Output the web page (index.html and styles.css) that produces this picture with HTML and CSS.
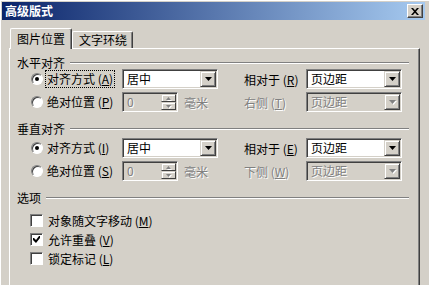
FILE: index.html
```html
<!DOCTYPE html>
<html lang="zh-CN">
<head>
  <meta charset="UTF-8" />
  <title>高级版式</title>
  <link rel="stylesheet" href="styles.css">
</head>
<body>
  <div class="dialog">
    <div class="titlebar">
      <span class="title">高级版式</span>
      <span class="close">
        <svg width="8" height="7" viewBox="0 0 8 7"><path d="M0 0h2l2 2.3L6 0h2L5 3.5 8 7H6L4 4.7 2 7H0l3-3.5z"/></svg>
      </span>
    </div>

    <div class="tabs">
      <div class="tab active">图片位置</div>
      <div class="tab">文字环绕</div>
    </div>

    <div class="panel">
      <div class="legend"><span>水平对齐</span><i class="rule"></i></div>
      <div class="rows rows-h">
        <div class="row">
          <div class="opt"><span class="radio on"></span><span class="lbl focus">对齐方式 (<u>A</u>)</span></div>
          <div class="mid"><div class="combo"><span class="val">居中</span><span class="drop"><svg width="7" height="4" viewBox="0 0 7 4"><path d="M0 0h7L3.5 4z"/></svg></span></div></div>
          <div class="side">相对于 (<u>R</u>)</div>
          <div class="combo"><span class="val">页边距</span><span class="drop"><svg width="7" height="4" viewBox="0 0 7 4"><path d="M0 0h7L3.5 4z"/></svg></span></div>
        </div>
        <div class="row">
          <div class="opt"><span class="radio"></span><span class="lbl">绝对位置 (<u>P</u>)</span></div>
          <div class="mid">
            <div class="spin"><span class="val off">0</span><span class="spin-btns"><span class="sb"><svg width="5" height="3" viewBox="0 0 5 3"><path d="M2.5 0L5 3H0z"/></svg></span><span class="sb"><svg width="5" height="3" viewBox="0 0 5 3"><path d="M0 0h5L2.5 3z"/></svg></span></span></div>
            <span class="unit off">毫米</span>
          </div>
          <div class="side off">右侧 (<u>T</u>)</div>
          <div class="combo disabled"><span class="val off">页边距</span><span class="drop"><svg width="7" height="4" viewBox="0 0 7 4"><path d="M0 0h7L3.5 4z"/></svg></span></div>
        </div>
      </div>

      <div class="legend legend-v"><span>垂直对齐</span><i class="rule"></i></div>
      <div class="rows rows-v">
        <div class="row">
          <div class="opt"><span class="radio on"></span><span class="lbl">对齐方式 (<u>I</u>)</span></div>
          <div class="mid"><div class="combo"><span class="val">居中</span><span class="drop"><svg width="7" height="4" viewBox="0 0 7 4"><path d="M0 0h7L3.5 4z"/></svg></span></div></div>
          <div class="side">相对于 (<u>E</u>)</div>
          <div class="combo"><span class="val">页边距</span><span class="drop"><svg width="7" height="4" viewBox="0 0 7 4"><path d="M0 0h7L3.5 4z"/></svg></span></div>
        </div>
        <div class="row">
          <div class="opt"><span class="radio"></span><span class="lbl">绝对位置 (<u>S</u>)</span></div>
          <div class="mid">
            <div class="spin"><span class="val off">0</span><span class="spin-btns"><span class="sb"><svg width="5" height="3" viewBox="0 0 5 3"><path d="M2.5 0L5 3H0z"/></svg></span><span class="sb"><svg width="5" height="3" viewBox="0 0 5 3"><path d="M0 0h5L2.5 3z"/></svg></span></span></div>
            <span class="unit off">毫米</span>
          </div>
          <div class="side off">下侧 (<u>W</u>)</div>
          <div class="combo disabled"><span class="val off">页边距</span><span class="drop"><svg width="7" height="4" viewBox="0 0 7 4"><path d="M0 0h7L3.5 4z"/></svg></span></div>
        </div>
      </div>

      <div class="legend legend-o"><span>选项</span><i class="rule"></i></div>
      <div class="checks">
        <div class="check-row"><span class="box"></span><span class="lbl">对象随文字移动 (<u>M</u>)</span></div>
        <div class="check-row"><span class="box"><svg width="7" height="7" viewBox="0 0 7 7"><path d="M0 2h1l2 2 3-4h1v2L3 7 0 4z"/></svg></span><span class="lbl">允许重叠 (<u>V</u>)</span></div>
        <div class="check-row"><span class="box"></span><span class="lbl">锁定标记 (<u>L</u>)</span></div>
      </div>
    </div>
  </div>
</body>
</html>
```

FILE: styles.css
```css
body {
  margin: 0;
  width: 429px;
  height: 285px;
  overflow: hidden;
  background: #d4d0c8;
  font-family: "Noto Sans CJK SC", "DejaVu Sans", sans-serif;
  font-size: 12px;
  color: #000;
}
.dialog {
  height: 285px;
  padding: 2px 4px 0 2px;
  box-sizing: border-box;
  box-shadow: inset 1px 1px 0 #fff;
}
.titlebar {
  height: 18px;
  display: flex;
  align-items: center;
  justify-content: space-between;
  padding: 0 2px 0 3px;
  background: linear-gradient(to right, #0a246a, #a6caf0);
}
.title {
  color: #fff;
  font-weight: bold;
  font-size: 12px;
  line-height: 14px;
}
.close {
  width: 16px;
  height: 14px;
  display: flex;
  align-items: center;
  justify-content: center;
  background: #d4d0c8;
  box-sizing: border-box;
  border: 1px solid;
  border-color: #fff #404040 #404040 #fff;
  box-shadow: inset -1px -1px 0 #808080;
}
.tabs {
  display: flex;
  align-items: flex-end;
  margin: 8px 0 0 8px;
  height: 20px;
}
.tab {
  height: 16px;
  line-height: 16px;
  padding: 0 5px 0 6px;
  border: 1px solid;
  border-color: #fff #404040 transparent #fff;
  border-bottom: none;
  box-shadow: inset -1px 0 0 #808080;
  border-radius: 2px 2px 0 0;
}
.tab.active {
  position: relative;
  z-index: 1;
  height: 20px;
  line-height: 20px;
  padding: 0 6px 0 6px;
  margin-bottom: -1px;
  background: #d4d0c8;
  width: 48px;
}
.panel {
  margin-left: 7px;
  width: 411px;
  height: 238px;
  box-sizing: border-box;
  border-top: 1px solid #fff;
  border-left: 1px solid #fff;
  border-right: 1px solid #404040;
  box-shadow: inset -1px 0 0 #808080;
  padding: 8px 10px 0 7px;
}
.legend {
  display: flex;
  align-items: center;
  height: 12px;
  line-height: 12px;
}
.legend-v, .legend-o {
  margin-top: 11px;
}
.rule {
  flex: 1;
  margin-left: 5px;
  border-top: 1px solid #808080;
  border-bottom: 1px solid #fff;
}
.rows {
  display: flex;
  flex-direction: column;
  gap: 3px;
  padding-left: 14px;
}
.rows-v {
  margin-top: 3px;
}
.row {
  display: flex;
  align-items: center;
  height: 20px;
}
.opt {
  width: 91px;
  display: flex;
  align-items: center;
}
.radio {
  width: 12px;
  height: 12px;
  box-sizing: border-box;
  border-radius: 50%;
  border: 1px solid;
  border-color: #808080 #fff #fff #808080;
  box-shadow: inset 1px 1px 0 #404040;
  background: #fff;
  margin-right: 2px;
  display: flex;
  align-items: center;
  justify-content: center;
}
.radio.on::after {
  content: "";
  width: 4px;
  height: 4px;
  border-radius: 50%;
  background: #000;
}
.lbl {
  padding: 1px 1px;
  border: 1px dotted transparent;
  line-height: 14px;
  white-space: nowrap;
}
.lbl.focus {
  border-color: #000;
}
.mid {
  width: 122px;
  display: flex;
  align-items: center;
}
.side {
  width: 62px;
  white-space: nowrap;
}
.combo, .spin {
  width: 96px;
  height: 20px;
  box-sizing: border-box;
  border: 1px solid;
  border-color: #808080 #fff #fff #808080;
  box-shadow: inset 1px 1px 0 #404040, inset -1px -1px 0 #d4d0c8;
  background: #fff;
  display: flex;
  align-items: center;
  padding: 1px;
}
.combo.disabled, .spin {
  background: #d4d0c8;
}
.val {
  flex: 1;
  padding-left: 3px;
  line-height: 16px;
}
.drop {
  width: 16px;
  height: 16px;
  box-sizing: border-box;
  background: #d4d0c8;
  border: 1px solid;
  border-color: #d4d0c8 #404040 #404040 #d4d0c8;
  box-shadow: inset 1px 1px 0 #fff, inset -1px -1px 0 #808080;
  display: flex;
  align-items: center;
  justify-content: center;
}
.disabled .drop svg, .sb svg {
  fill: #808080;
  filter: drop-shadow(1px 1px 0 #fff);
}
.spin {
  width: 56px;
}
.spin-btns {
  display: flex;
  flex-direction: column;
  height: 16px;
}
.sb {
  width: 15px;
  height: 8px;
  box-sizing: border-box;
  border: 1px solid;
  border-color: #d4d0c8 #404040 #404040 #d4d0c8;
  box-shadow: inset 1px 1px 0 #fff;
  display: flex;
  align-items: center;
  justify-content: center;
}
.unit {
  margin-left: 6px;
}
.off {
  color: #808080;
  text-shadow: 1px 1px 0 #fff;
}
.checks {
  margin-top: 7px;
  padding-left: 13px;
}
.check-row {
  height: 19px;
  display: flex;
  align-items: center;
}
.box {
  width: 13px;
  height: 13px;
  box-sizing: border-box;
  border: 1px solid;
  border-color: #808080 #fff #fff #808080;
  box-shadow: inset 1px 1px 0 #404040;
  background: #fff;
  margin-right: 3px;
  display: flex;
  align-items: center;
  justify-content: center;
}
```
